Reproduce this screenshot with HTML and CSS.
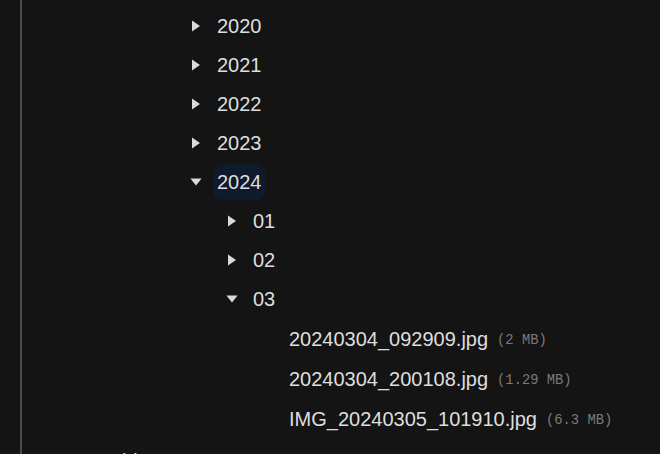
FILE: index.html
```html
<!DOCTYPE html>
<html>

<head>
    <meta charset="utf-8">
    <title>Files</title>
    <link rel="stylesheet" href="styles.css">
</head>

<body>
    <div class="panel">
        <ul class="tree level3">
            <li><div class="row"><span class="caret closed"></span><span class="label">2020</span></div></li>
            <li><div class="row"><span class="caret closed"></span><span class="label">2021</span></div></li>
            <li><div class="row"><span class="caret closed"></span><span class="label">2022</span></div></li>
            <li><div class="row"><span class="caret closed"></span><span class="label">2023</span></div></li>
            <li>
                <div class="row"><span class="caret open"></span><span class="label selected">2024</span></div>
                <ul class="tree">
                    <li><div class="row"><span class="caret closed"></span><span class="label">01</span></div></li>
                    <li><div class="row"><span class="caret closed"></span><span class="label">02</span></div></li>
                    <li>
                        <div class="row"><span class="caret open"></span><span class="label">03</span></div>
                        <ul class="tree files">
                            <li><div class="row file"><span class="caret"></span><span class="label">20240304_092909.jpg</span><span class="size">(2 MB)</span></div></li>
                            <li><div class="row file"><span class="caret"></span><span class="label">20240304_200108.jpg</span><span class="size">(1.29 MB)</span></div></li>
                            <li><div class="row file"><span class="caret"></span><span class="label">IMG_20240305_101910.jpg</span><span class="size">(6.3 MB)</span></div></li>
                        </ul>
                    </li>
                </ul>
            </li>
        </ul>
        <ul class="tree level0">
            <li><div class="row file"><span class="caret closed"></span><span class="label">videos</span></div></li>
        </ul>
    </div>
</body>

</html>
```

FILE: styles.css
```css
html, body {
margin: 0;
height: 100%;
overflow: hidden;
background-color: #141414;
}

body {
font-family: "Liberation Sans", Arial, sans-serif;
font-size: 20px;
color: #dedede;
}

.panel {
margin-left: 20px;
min-height: 100%;
border-left: 2px solid #4b4b4b;
padding-top: 6px;
padding-left: 61px;
}

.tree {
list-style: none;
margin: 0;
padding: 0 0 0 36px;
}

.tree.level3 {
padding-left: 107px;
}

.tree.level0 {
padding-left: 2px;
margin-top: 2px;
}

.row {
display: flex;
align-items: center;
height: 39px;
}

.row.file {
height: 40px;
}

.tree.files {
margin-top: 1px;
}

.caret {
width: 23px;
height: 12px;
flex-shrink: 0;
}

.caret.closed {
background: url("data:image/svg+xml;utf8,<svg xmlns='http://www.w3.org/2000/svg' width='12' height='12'><path d='M2 0.4 L10 6 L2 11.6 Z' fill='%23dadada'/></svg>") no-repeat left center;
}

.caret.open {
background: url("data:image/svg+xml;utf8,<svg xmlns='http://www.w3.org/2000/svg' width='12' height='12'><path d='M0.4 2.6 L11.6 2.6 L6 9.6 Z' fill='%23dadada'/></svg>") no-repeat left center;
}

.label {
padding: 0 4px;
line-height: 36px;
border-radius: 9px;
}

.label.selected {
background-color: #0f1a2d;
}

.size {
font-family: "Liberation Mono", "DejaVu Sans Mono", monospace;
font-size: 13.8px;
color: #7a7a7a;
margin-left: 5px;
padding-top: 3px;
}
```
